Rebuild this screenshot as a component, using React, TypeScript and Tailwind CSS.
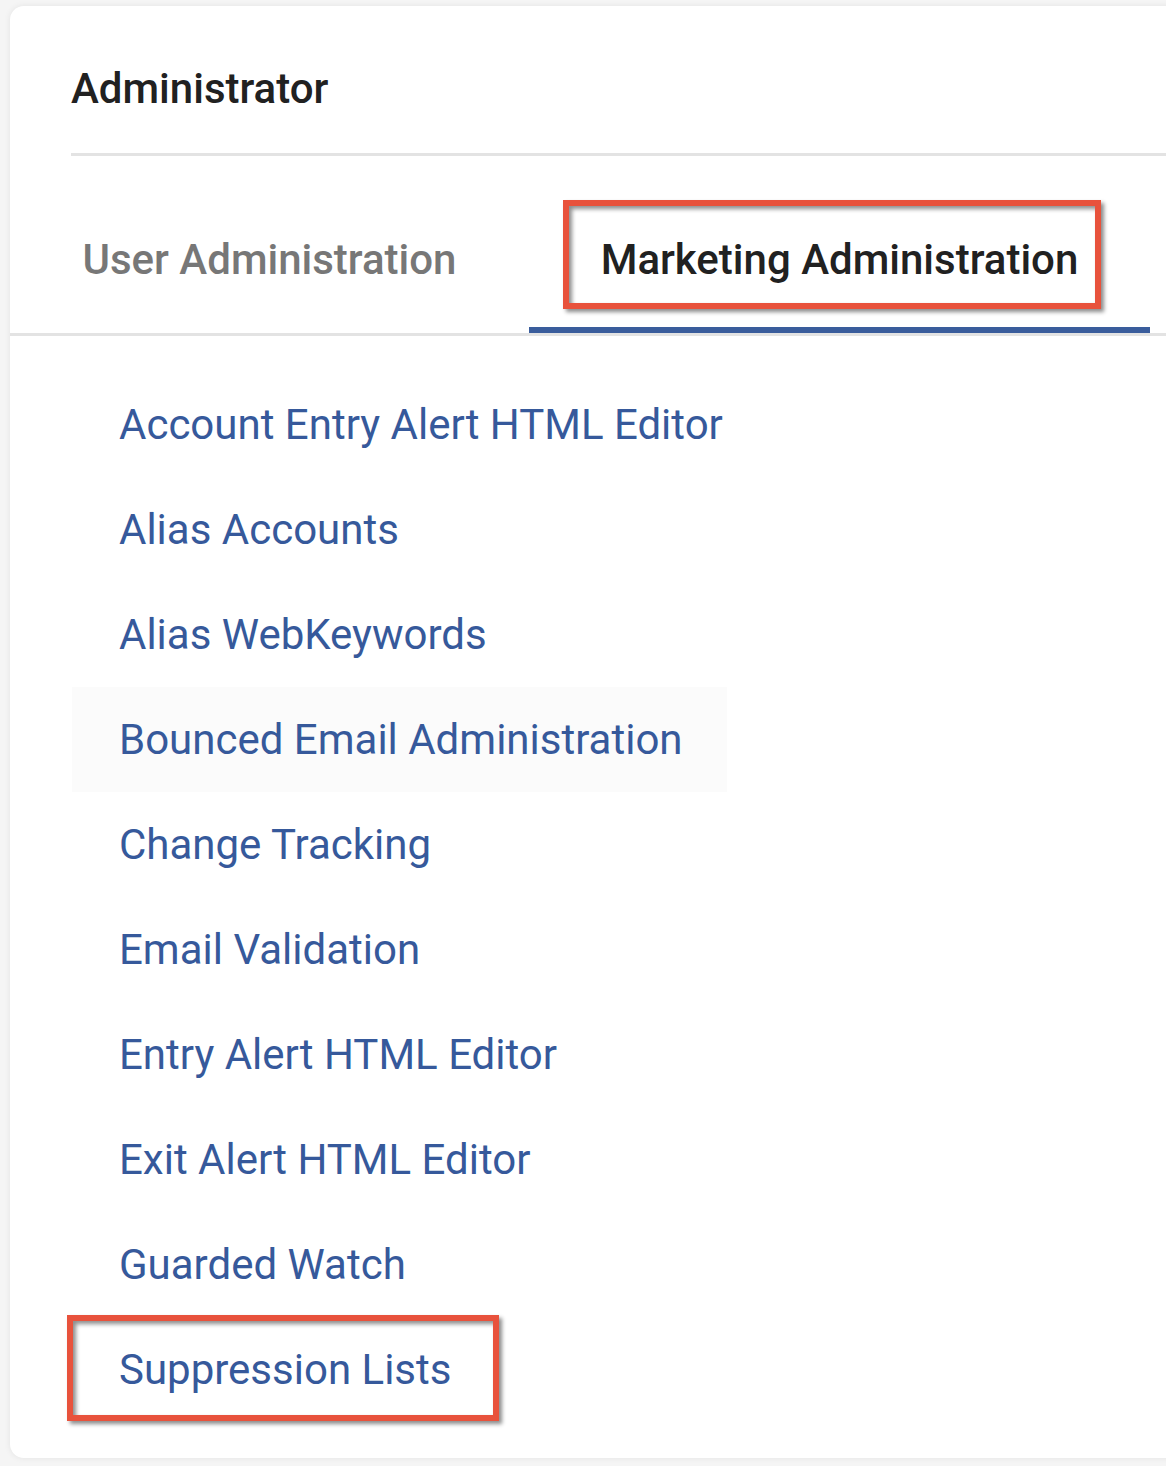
import React from "react";

const links = [
  "Account Entry Alert HTML Editor",
  "Alias Accounts",
  "Alias WebKeywords",
  "Bounced Email Administration",
  "Change Tracking",
  "Email Validation",
  "Entry Alert HTML Editor",
  "Exit Alert HTML Editor",
  "Guarded Watch",
  "Suppression Lists",
];

const HOVERED = 3;

const callout =
  "pointer-events-none absolute border-[6px] border-[#e8523c] shadow-[3px_3px_4px_rgba(0,0,0,0.45),inset_3px_3px_4px_rgba(0,0,0,0.45)]";

export default function App() {
  return (
    <div
      className="min-h-[1466px] w-[1166px] overflow-hidden bg-[#f5f5f5] pl-[10px] pt-[6px]"
      style={{ fontFamily: "Roboto, 'Noto Sans', sans-serif" }}
    >
      <div className="w-[1180px] rounded-l-[14px] bg-white shadow-[0_0_6px_rgba(0,0,0,0.08)]">
        {/* header */}
        <div className="pl-[61px]">
          <div className="h-[147px] pt-[58px]">
            <h1 className="text-[42px] font-medium leading-[50px] text-[#212121]">Administrator</h1>
          </div>
          <div className="h-[3px] bg-[#e3e3e3]" />
        </div>

        {/* tabs */}
        <div className="flex border-b-[3px] border-[#e3e3e3]">
          <div className="h-[177px] w-[519px] pt-[79px] text-center text-[42px] font-medium leading-[50px] text-[#777777]">
            User Administration
          </div>
          <div className="relative h-[177px] w-[621px] pt-[79px] text-center text-[42px] font-medium leading-[50px] text-[#212121]">
            Marketing Administration
            <div className="absolute bottom-0 left-0 h-[6px] w-full bg-[#3a5d9c]" />
            <span className={`${callout} left-[34px] top-[44px] h-[109px] w-[538px]`} />
          </div>
        </div>

        {/* link list */}
        <ul className="py-[36px]">
          {links.map((l, i) => (
            <li key={l} className="relative flex h-[105px] pl-[62px]">
              <a
                className={`flex h-full w-[655px] items-center pl-[47px] text-[42px] leading-[50px] text-[#36599b] ${
                  i === HOVERED ? "bg-[#fbfbfb]" : ""
                }`}
              >
                {l}
              </a>
              {i === links.length - 1 && (
                <span className={`${callout} left-[57px] top-[-2px] h-[106px] w-[432px]`} />
              )}
            </li>
          ))}
        </ul>
      </div>
    </div>
  );
}
